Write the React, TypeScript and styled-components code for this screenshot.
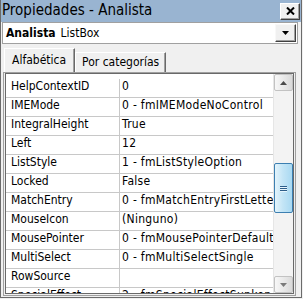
import React from 'react';
import styled, { createGlobalStyle } from 'styled-components';

const GlobalStyle = createGlobalStyle`
  html, body {
    margin: 0;
    padding: 0;
    background: #f0f0f0;
  }
  body {
    font-family: "DejaVu Sans Condensed", "DejaVu Sans", "Liberation Sans", sans-serif;
    font-stretch: condensed;
    color: #000;
  }
`;

const PROPS: [string, string][] = [
  ['HelpContextID', '0'],
  ['IMEMode', '0 - fmIMEModeNoControl'],
  ['IntegralHeight', 'True'],
  ['Left', '12'],
  ['ListStyle', '1 - fmListStyleOption'],
  ['Locked', 'False'],
  ['MatchEntry', '0 - fmMatchEntryFirstLetter'],
  ['MouseIcon', '(Ninguno)'],
  ['MousePointer', '0 - fmMousePointerDefault'],
  ['MultiSelect', '0 - fmMultiSelectSingle'],
  ['RowSource', ''],
  ['SpecialEffect', '2 - fmSpecialEffectSunken'],
];

export default function App() {
  const [tab, setTab] = React.useState(0);

  return (
    <>
      <GlobalStyle />
      <Window>
        <TitleBar>
          <Title>Propiedades - Analista</Title>
          <CloseButton aria-label="Cerrar">
            <svg width="9" height="8" viewBox="0 0 9 8">
              <path d="M1 0.5 L8 7.5 M8 0.5 L1 7.5" stroke="#000" strokeWidth="2" />
            </svg>
          </CloseButton>
        </TitleBar>

        <Combo>
          <ObjectName>Analista</ObjectName>
          <ObjectType>ListBox</ObjectType>
          <DropButton>
            <svg width="7" height="4" viewBox="0 0 7 4">
              <path d="M0 0 H7 L3.5 4 Z" fill="#000" />
            </svg>
          </DropButton>
        </Combo>

        <TabStrip>
          <Tab $active={tab === 0} onClick={() => setTab(0)}>Alfabética</Tab>
          <Tab $active={tab === 1} onClick={() => setTab(1)}>Por categorías</Tab>
        </TabStrip>

        <Panel>
          <Grid>
            <Rows>
              {PROPS.map(([name, value]) => (
                <Row key={name}>
                  <NameCell>{name}</NameCell>
                  <ValueCell>{value}</ValueCell>
                </Row>
              ))}
            </Rows>
            <ScrollBar>
              <ScrollButton>
                <svg width="7" height="4" viewBox="0 0 7 4">
                  <path d="M0 4 H7 L3.5 0 Z" fill="#4a4a4a" />
                </svg>
              </ScrollButton>
              <Track>
                <Thumb>
                  <Grip />
                  <Grip />
                  <Grip />
                </Thumb>
              </Track>
              <ScrollButton>
                <svg width="7" height="4" viewBox="0 0 7 4">
                  <path d="M0 0 H7 L3.5 4 Z" fill="#7a7a7a" />
                </svg>
              </ScrollButton>
            </ScrollBar>
          </Grid>
        </Panel>
      </Window>
    </>
  );
}

const Window = styled.div`
  box-sizing: border-box;
  width: 302px;
  height: 298px;
  border: 1px solid #6b6b6b;
  border-top: none;
  background: #f0f0f0;
  display: flex;
  flex-direction: column;
`;

const TitleBar = styled.div`
  height: 22px;
  flex: none;
  background: #99b4d1;
  display: flex;
  align-items: center;
  justify-content: space-between;
  padding: 0 1px 0 1px;
`;

const Title = styled.div`
  font-size: 15px;
  line-height: 20px;
  padding-bottom: 2px;
  white-space: nowrap;
`;

const CloseButton = styled.div`
  box-sizing: border-box;
  width: 20px;
  height: 17px;
  background: #f0f0f0;
  border: 1px solid;
  border-color: #ffffff #404040 #404040 #ffffff;
  box-shadow: inset -1px -1px 0 #a0a0a0;
  display: flex;
  align-items: center;
  justify-content: center;
`;

const Combo = styled.div`
  box-sizing: border-box;
  height: 22px;
  flex: none;
  margin: 0 3px 0 1px;
  border: 1px solid #a0a0a0;
  background: #fff;
  display: flex;
  align-items: center;
  padding-left: 3px;
  font-size: 12px;
  gap: 5px;
`;

const ObjectName = styled.span`
  font-weight: bold;
  font-size: 12px;
`;

const ObjectType = styled.span`
  font-size: 12px;
`;

const DropButton = styled.div`
  box-sizing: border-box;
  margin-left: auto;
  margin-right: 1px;
  width: 21px;
  height: 18px;
  background: #f0f0f0;
  border: 1px solid;
  border-color: #f8f8f8 #404040 #404040 #f8f8f8;
  box-shadow: inset -1px -1px 0 #a0a0a0;
  display: flex;
  align-items: center;
  justify-content: center;
`;

const TabStrip = styled.div`
  height: 28px;
  flex: none;
  display: flex;
  align-items: flex-end;
  padding-left: 3px;
`;

const Tab = styled.div<{ $active: boolean }>`
  box-sizing: border-box;
  height: ${p => (p.$active ? 24 : 20)}px;
  padding: ${p => (p.$active ? '3px 8px 0 7px' : '1px 6px 0 6px')};
  font-size: 12px;
  line-height: 16px;
  white-space: nowrap;
  background: #f0f0f0;
  border: 1px solid;
  border-bottom: none;
  border-color: #ffffff #696969 transparent #ffffff;
  box-shadow: inset -1px 0 0 #a0a0a0;
  cursor: default;
`;

const Panel = styled.div`
  flex: 1;
  min-height: 0;
  margin: 0 5px 1px 2px;
  border: 1px solid #a0a0a0;
  padding: 0 1px 1px 1px;
  display: flex;
`;

const Grid = styled.div`
  flex: 1;
  min-width: 0;
  border: 1px solid #696969;
  background: #fff;
  display: flex;
`;

const Rows = styled.div`
  flex: 1;
  min-width: 0;
  overflow: hidden;
  padding-top: 5px;
  font-size: 12px;
`;

const Row = styled.div`
  box-sizing: border-box;
  height: 19px;
  display: grid;
  grid-template-columns: 114px 1fr;
  border-bottom: 1px solid #c8c8c8;
`;

const NameCell = styled.div`
  padding-left: 5px;
  line-height: 15px;
  border-right: 1px solid #c8c8c8;
  white-space: nowrap;
  overflow: hidden;
`;

const ValueCell = styled.div`
  padding-left: 2px;
  line-height: 15px;
  letter-spacing: 0.3px;
  white-space: nowrap;
  overflow: hidden;
`;

const ScrollBar = styled.div`
  width: 19px;
  flex: none;
  background: #f3f3f3;
  border-left: 1px solid #e6e6e6;
  display: flex;
  flex-direction: column;
`;

const ScrollButton = styled.div`
  box-sizing: border-box;
  height: 17px;
  flex: none;
  border: 1px solid #c2c2c2;
  border-radius: 2px;
  background: linear-gradient(to right, #f7f7f7, #e6e6e6 60%, #d9d9d9);
  display: flex;
  align-items: center;
  justify-content: center;
`;

const Track = styled.div`
  flex: 1;
  min-height: 0;
`;

const Thumb = styled.div`
  box-sizing: border-box;
  margin-top: 72px;
  height: 50px;
  border: 1px solid #3c7fb1;
  border-radius: 2px;
  background: linear-gradient(to right, #e3f4fc, #c4e5f6 45%, #a9d9f2);
  display: flex;
  flex-direction: column;
  align-items: center;
  justify-content: center;
  gap: 1px;
`;

const Grip = styled.div`
  width: 7px;
  height: 1px;
  background: #2e5e8a;
  box-shadow: 0 1px 0 #e8f6fd;
`;
